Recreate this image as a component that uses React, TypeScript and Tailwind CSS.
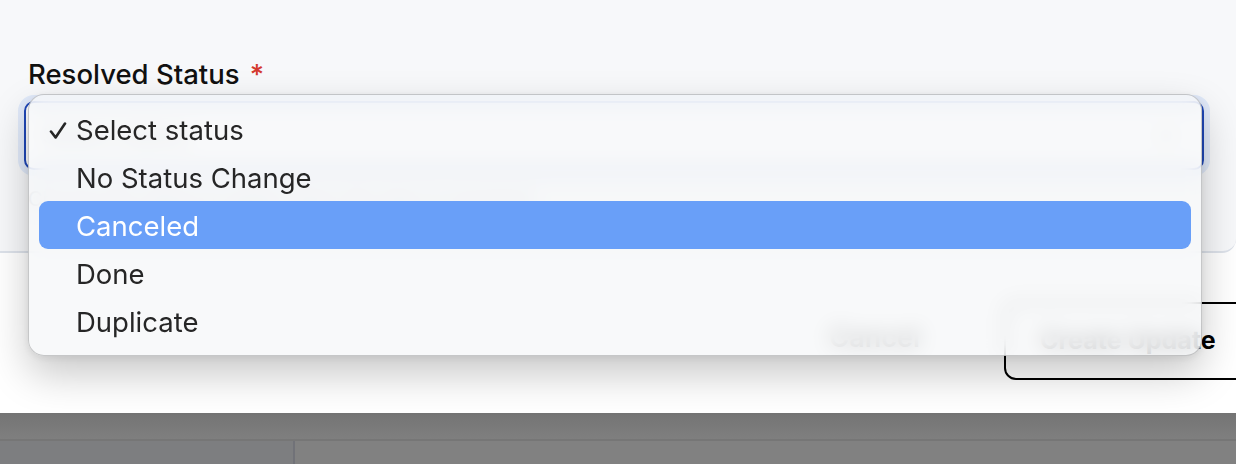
import { ChevronDown } from 'lucide-react';

const options = ['Select status', 'No Status Change', 'Canceled', 'Done', 'Duplicate'];

function NativeMenu({ selected, highlighted }: { selected: number; highlighted: number }) {
  return (
    <div className="absolute left-[28px] top-[94px] w-[1174px] rounded-[16px] border border-black/20 bg-[#f6f7f9]/80 px-[10px] py-[10px] shadow-[0_18px_40px_rgba(0,0,0,0.22),0_2px_8px_rgba(0,0,0,0.08)] backdrop-blur-[10px]">
      {options.map((opt, i) => (
        <div
          key={opt}
          className={`flex h-[48px] items-center rounded-[9px] pl-[10px] pt-[3px] ${
            i === highlighted ? 'bg-[#699ff8] text-white' : 'text-[#262626]'
          }`}
        >
          <span className="flex w-[27px] items-center">
            {i === selected && (
              <svg viewBox="0 0 18 18" className="h-[18px] w-[18px]" fill="none" stroke="currentColor" strokeWidth={2.6} strokeLinecap="round" strokeLinejoin="round">
                <path d="M2 9.5l4.6 6L16 1.5" />
              </svg>
            )}
          </span>
          <span className="text-[27.5px] leading-none">{opt}</span>
        </div>
      ))}
    </div>
  );
}

export default function App() {
  return (
    <div className="relative h-[464px] w-[1236px] overflow-hidden bg-white font-['Inter',sans-serif]">
      <div className="h-[253px] rounded-br-[14px] border-b-2 border-[#dde2ea] bg-[#f7f8fa] pl-[28px] pr-[32px] pt-[54px]">
        <label className="text-[27.5px] font-medium text-[#111]">
          Resolved Status <span className="ml-[3px] text-[#d43a2f]">*</span>
        </label>
        <div className="-ml-[4px] mt-[6px] flex h-[69px] items-center justify-between rounded-[10px] border-2 border-[#1f47b7] bg-white pl-[16px] pr-[22px] shadow-[0_0_0_6px_rgba(59,130,246,0.12)]">
          <span className="text-[24px] text-[#9ca3af]">Select status</span>
          <ChevronDown className="h-[28px] w-[28px] text-[#6b7280]" />
        </div>
        <p className="mt-[14px] text-[20px] text-[#9ca3af]">Choose the status to apply when this item is resolved</p>
      </div>
      <div className="-mr-[30px] flex h-[160px] items-start justify-end gap-[84px] pt-[49px]">
        <button className="mt-[22px] text-[27px] font-semibold leading-none text-[#111]">Cancel</button>
        <button className="h-[78px] w-[262px] rounded-[12px] border-2 border-black pl-[34px] text-left text-[25px] font-bold text-black">
          Create Update
        </button>
      </div>
      <div className="h-[51px] bg-[#7b7b7b]">
        <div className="h-[28px] border-b-2 border-[#767676] bg-gradient-to-b from-[#747474] to-[#7f7f7f]" />
        <div className="flex h-[23px]">
          <div className="w-[295px] border-r-2 border-[#717278] bg-[#7d7e80]" />
          <div className="flex-1 bg-[#818181]" />
        </div>
      </div>
      <NativeMenu selected={0} highlighted={2} />
    </div>
  );
}
